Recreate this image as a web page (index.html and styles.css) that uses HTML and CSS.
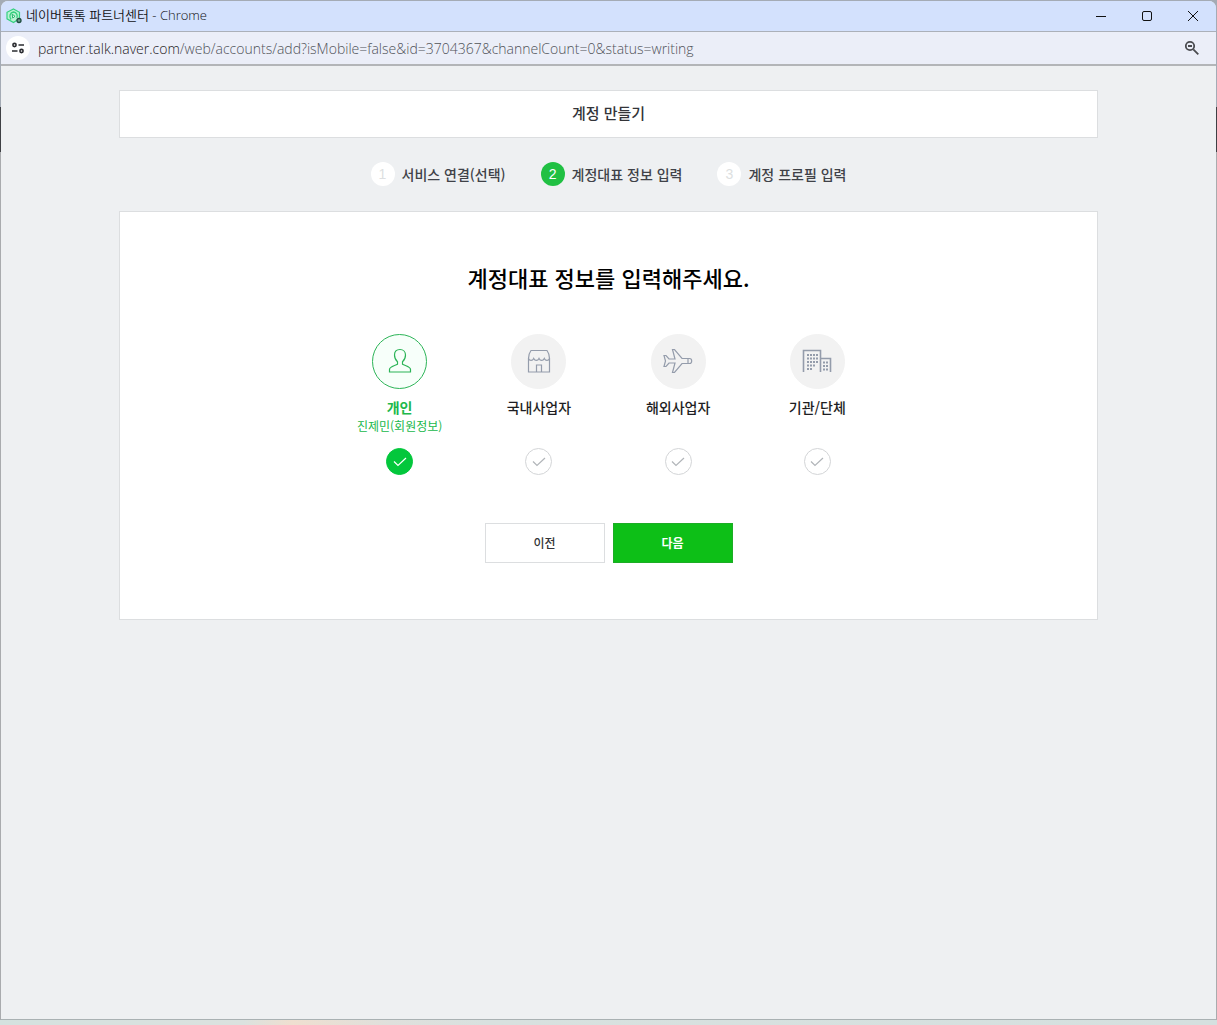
FILE: index.html
```html
<!DOCTYPE html>
<html lang="ko">
<head>
    <meta charset="UTF-8">
    <meta name="viewport" content="width=device-width, initial-scale=1.0">
    <title>네이버톡톡 파트너센터</title>
    <link rel="stylesheet" href="styles.css">
</head>
<body>

    <div class="window">
        <div class="titlebar">
            <svg class="favicon" width="16" height="16" viewBox="0 0 16 16" fill="none">
                <path d="M7.5 1 13.5 4.300V10.500L7.500 14.500 1 10.800V4.300Z" fill="#b9f3d3" stroke="#35d07f" stroke-width="1.200"/>
                <path d="M5 11.500C2.800 8.500 4 4.500 7.500 4c3 .3 4.500 3.300 3.300 6" stroke="#35d07f" stroke-width="1.300"/>
                <path d="M6.200 6.200 9 8.300 6.700 10Z" fill="#fff" stroke="#25b56c"/>
                <circle cx="13" cy="12.500" r="2" fill="#6d9c8b" stroke="#1f4d40" stroke-width="1.300"/>
            </svg>
            <span class="window-title">네이버톡톡 파트너센터 - Chrome</span>
            <div class="window-buttons">
                <button type="button" aria-label="최소화"><svg width="12" height="12" viewBox="0 0 12 12"><path d="M1 6.500h10"/></svg></button>
                <button type="button" aria-label="최대화"><svg width="12" height="12" viewBox="0 0 12 12"><rect x="1.500" y="1.500" width="9" height="9" rx="1.500"/></svg></button>
                <button type="button" aria-label="닫기"><svg width="12" height="12" viewBox="0 0 12 12"><path d="M1 1l10 10M11 1L1 11"/></svg></button>
            </div>
        </div>

        <div class="addressbar">
            <button type="button" class="site-info" aria-label="사이트 정보 보기">
                <svg width="14" height="14" viewBox="0 0 14 14">
                    <circle cx="3.500" cy="4" r="1.600"/>
                    <path d="M7.500 4H13M1 10h5.500"/>
                    <circle cx="10.500" cy="10" r="1.600"/>
                </svg>
            </button>
            <div class="url"><span class="url-host">partner.talk.naver.com</span>/web/accounts/add?isMobile=false&amp;id=3704367&amp;channelCount=0&amp;status=writing</div>
            <button type="button" class="zoom" aria-label="축소">
                <svg width="16" height="16" viewBox="0 0 16 16">
                    <circle cx="6" cy="6" r="4.200"/>
                    <path d="M4 6h4M9.300 9.300l5 5"/>
                </svg>
            </button>
        </div>

        <main class="page">
            <h1 class="page-title">계정 만들기</h1>

            <ol class="steps">
                <li class="step"><span class="step-num">1</span>서비스 연결(선택)</li>
                <li class="step active"><span class="step-num">2</span>계정대표 정보 입력</li>
                <li class="step"><span class="step-num">3</span>계정 프로필 입력</li>
            </ol>

            <form class="panel">
                <h2 class="panel-title">계정대표 정보를 입력해주세요.</h2>

                <div class="types">
                    <label class="type">
                        <span class="type-icon">
                            <svg width="30" height="30" viewBox="0 0 30 30">
                                <path d="M15 2.500c-3.300 0-5.500 2.300-5.500 5.600 0 3 1.300 5.200 3 6.600v2.500c-2.700 1.600-8 2.300-8 5.300v2.500h21v-2.500c0-3-5.300-3.700-8-5.300v-2.500c1.700-1.400 3-3.600 3-6.600 0-3.300-2.200-5.600-5.500-5.600Z"/>
                            </svg>
                        </span>
                        <span class="type-name">개인</span>
                        <span class="type-sub">진제민(회원정보)</span>
                        <span class="check">
                            <input type="radio" name="type" checked>
                            <svg width="14" height="10" viewBox="0 0 14 10"><path d="M1 4.500 5 8.500 13 1"/></svg>
                        </span>
                    </label>
                    <label class="type">
                        <span class="type-icon">
                            <svg width="30" height="30" viewBox="0 0 30 30">
                                <path d="M4.500 11.500V25h21V11.500M12.500 25v-7h5v7"/>
                                <path d="M7 3.500h16c1.500 2 2.500 4.500 2.500 8-1 2.500-4 2.500-5.200 0-1.200 2.500-4.100 2.500-5.300 0-1.200 2.500-4.100 2.500-5.300 0-1.200 2.500-4.200 2.500-5.200 0 0-3.500 1-6 2.500-8Z"/>
                            </svg>
                        </span>
                        <span class="type-name">국내사업자</span>
                        <span class="type-sub"></span>
                        <span class="check">
                            <input type="radio" name="type">
                            <svg width="14" height="10" viewBox="0 0 14 10"><path d="M1 4.500 5 8.500 13 1"/></svg>
                        </span>
                    </label>
                    <label class="type">
                        <span class="type-icon">
                            <svg width="30" height="30" viewBox="0 0 30 30">
                                <path d="M1 8.500h2l3 3.500h6L9.500 2.500h2L19 11.500h7.500c1.500 0 2.200.8 2.200 2.500s-.7 2.500-2.200 2.500H19l-7.500 9h-2L12 16H6l-3 3.500H1L2.500 14ZM25 11.500v5"/>
                            </svg>
                        </span>
                        <span class="type-name">해외사업자</span>
                        <span class="type-sub"></span>
                        <span class="check">
                            <input type="radio" name="type">
                            <svg width="14" height="10" viewBox="0 0 14 10"><path d="M1 4.500 5 8.500 13 1"/></svg>
                        </span>
                    </label>
                    <label class="type">
                        <span class="type-icon">
                            <svg width="30" height="30" viewBox="0 0 30 30">
                                <path d="M1.500 25V3.500h17V25M18.500 11.500h10V25" stroke-width="1.600"/>
                                <path d="M5 8h11M5 11.500h11M5 15h11M5 18.500h9M5 22h6M21 15.500h5.500M21 19h5.500M21 22.500h5.500" stroke-width="2" stroke-dasharray="2 1"/>
                            </svg>
                        </span>
                        <span class="type-name">기관/단체</span>
                        <span class="type-sub"></span>
                        <span class="check">
                            <input type="radio" name="type">
                            <svg width="14" height="10" viewBox="0 0 14 10"><path d="M1 4.500 5 8.500 13 1"/></svg>
                        </span>
                    </label>
                </div>

                <div class="actions">
                    <button type="button" class="btn">이전</button>
                    <button type="submit" class="btn btn-next">다음</button>
                </div>
            </form>
        </main>
    </div>

</body>
</html>
```

FILE: styles.css
```css
* { box-sizing: border-box; }

/* desktop showing around the browser window */
body {
    margin: 0;
    padding: 1px 1px 5px;
    min-height: 100vh;
    display: flex;
    flex-direction: column;
    font-family: "Noto Sans CJK KR", sans-serif;
    background:
        linear-gradient(to right, #d4e2df, #dbe2df 20%, #efdfd0 24%, #dfe0dc 32%, #d8e1df 40%, #d5e0df) bottom / 100% 5px no-repeat,
        linear-gradient(#a4abb5 107px, #3e4044 107px, #3e4044 152px, #a9abae 152px);
}
button { font: inherit; border: none; background: none; padding: 0; cursor: pointer; }
svg { display: block; fill: none; }

.window { flex: 1; display: flex; flex-direction: column; background: #eef0f2; border-bottom: 1px solid #a9b1b3; border-radius: 7px 7px 0 0; overflow: hidden; }

.titlebar { height: 31px; display: flex; align-items: center; padding-left: 5px; background: #d3e1fd; border-bottom: 1px solid #abb0b9; }
.window-title { flex: 1; margin-left: 4px; line-height: 16px; padding-bottom: 2px; font-family: "Open Sans", "Noto Sans CJK KR", sans-serif; font-size: 13px; font-weight: 350; color: #111114; }
.window-buttons { display: flex; align-self: stretch; }
.window-buttons button { width: 46px; display: flex; align-items: center; justify-content: center; }
.window-buttons svg { stroke: #111; stroke-width: 1; }

.addressbar { height: 34px; display: flex; align-items: center; padding: 0 16px 0 5px; background: #ebeef8; border-bottom: 2px solid #b3b5b8; }
.site-info { width: 24px; height: 24px; display: flex; align-items: center; justify-content: center; border-radius: 50%; background: #fff; }
.site-info svg { stroke: #2b2c30; stroke-width: 1.6; }
.url { flex: 1; margin-left: 8px; font-family: "Open Sans", sans-serif; font-size: 14px; font-weight: 350; color: #505358; }
.url-host { color: #1f2023; }
.zoom svg { stroke: #4a4b4f; stroke-width: 1.8; }

.page { width: 100%; max-width: 979px; margin: 0 auto; padding: 24px 0; }
.page-title { margin: 0; height: 48px; line-height: 44px; background: #fff; border: 1px solid #dcdee0; font-size: 15px; font-weight: 500; color: #333438; text-align: center; }

.steps { display: flex; justify-content: center; gap: 35px; margin: 24px 0; padding: 0; list-style: none; }
.step { display: flex; align-items: center; gap: 7px; height: 25px; line-height: 24px; padding-bottom: 2px; font-size: 14px; font-weight: 500; color: #404248; }
.step-num { width: 24px; height: 24px; border-radius: 50%; background: #fff; color: #dddfe1; font-family: "Liberation Sans", sans-serif; font-weight: 400; text-align: center; }
.step.active .step-num { background: #20c043; color: #fff; }

.panel { padding: 50px 0 56px; background: #fff; border: 1px solid #dcdee0; }
.panel-title { margin: 0; line-height: 30px; font-size: 22px; font-weight: 500; color: #000; text-align: center; }

.types { display: grid; grid-template-columns: repeat(4, 1fr); max-width: 557px; margin: 42px auto 0; }
.type { display: flex; flex-direction: column; align-items: center; color: #1e1e23; cursor: pointer; }
.type-icon { width: 55px; height: 55px; display: flex; align-items: center; justify-content: center; border: 1px solid #f2f2f2; border-radius: 50%; background: #f2f2f2; }
.type-icon svg { stroke: #949cab; stroke-width: 1.2; }
.type-name { margin-top: 8px; line-height: 20px; font-size: 14px; font-weight: 500; }
.type-sub { height: 16px; line-height: 18px; font-size: 12px; }
.check { display: grid; place-items: center; margin-top: 15px; }
.check input, .check svg { grid-area: 1 / 1; }
.check input { appearance: none; width: 27px; height: 27px; margin: 0; border: 1px solid #d3d5d7; border-radius: 50%; background: #fff; cursor: pointer; }
.check svg { z-index: 1; stroke: #b1b5b9; stroke-width: 1.2; pointer-events: none; }

.type:has(:checked) { color: #20b84b; }
.type:has(:checked) .type-name { font-weight: 700; }
.type:has(:checked) .type-icon { border-color: #2cb457; background: #f7fffa; }
.type:has(:checked) .type-icon svg { stroke: #2cb457; }
.type:has(:checked) input { border-color: #03c73c; background: #03c73c; }
.type:has(:checked) .check svg { stroke: #fff; }

.actions { display: flex; justify-content: center; gap: 8px; margin-top: 48px; }
.btn { width: 120px; height: 40px; line-height: 36px; background: #fff; border: 1px solid #dcdee0; font-size: 12px; font-weight: 500; color: #333438; }
.btn-next { background: #0dbf17; border-color: #1cad25; color: #fff; font-weight: 700; }
```
